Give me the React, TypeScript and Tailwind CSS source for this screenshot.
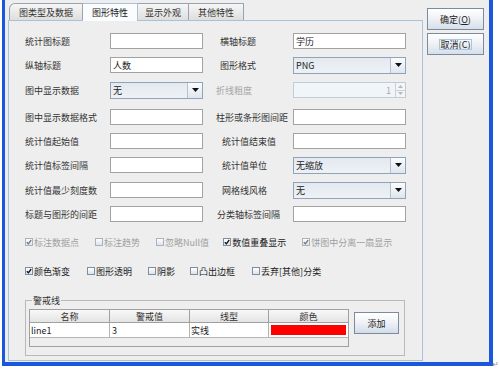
import React from "react";

const font = "font-['Noto_Sans_CJK_SC','Noto_Sans',sans-serif]";

type FieldProps = { value?: string; className?: string };

const TextField: React.FC<FieldProps> = ({ value = "", className = "" }) => (
  <div
    className={`h-[16px] border border-[#a2a2a2] bg-white flex items-center px-[2px] text-[#222] ${className}`}
  >
    {value}
  </div>
);

const Arrow = () => (
  <svg width="7" height="4" viewBox="0 0 7 4">
    <path d="M0 0h7L3.5 4z" fill="#111" />
  </svg>
);

const Combo: React.FC<FieldProps> = ({ value = "", className = "" }) => (
  <div className={`h-[17px] flex border border-[#8fa3bb] ${className}`}>
    <div className="flex-1 flex items-center px-[2px] bg-gradient-to-b from-[#e4e9f0] to-[#eef2f6] text-[#222]">
      {value}
    </div>
    <div className="w-[15px] border-l border-[#b3c1d2] flex items-center justify-center bg-gradient-to-b from-[#fbfcfd] to-[#dfe6ee]">
      <Arrow />
    </div>
  </div>
);

const Spinner: React.FC<FieldProps> = ({ value = "", className = "" }) => (
  <div className={`h-[16px] flex border border-[#c3ccd6] bg-[#f0f5fa] ${className}`}>
    <div className="flex-1 flex items-center justify-end pr-[4px] text-[#a8a8a8]">{value}</div>
    <div className="w-[10px] flex flex-col border-l border-[#c9d1da]">
      <div className="flex-1 border-b border-[#c9d1da] bg-[#f3f5f8] flex items-center justify-center">
        <svg width="5" height="3" viewBox="0 0 5 3">
          <path d="M0 3h5L2.5 0z" fill="#b9b9b9" />
        </svg>
      </div>
      <div className="flex-1 bg-[#f3f5f8] flex items-center justify-center">
        <svg width="5" height="3" viewBox="0 0 5 3">
          <path d="M0 0h5L2.5 3z" fill="#b9b9b9" />
        </svg>
      </div>
    </div>
  </div>
);

type CheckProps = { label: string; checked?: boolean; disabled?: boolean; className?: string };

const Check: React.FC<CheckProps> = ({ label, checked, disabled, className = "" }) => (
  <div className={`flex items-center ${className}`}>
    <div
      className={`w-[8px] h-[8px] border flex items-center justify-center bg-gradient-to-b from-white to-[#dbe3ec] ${
        disabled ? "border-[#a9b3bf]" : "border-[#7d8ea2]"
      }`}
    >
      {checked && (
        <svg width="6" height="6" viewBox="0 0 6 6">
          <path
            d="M0.8 3.2 L2.4 4.8 L5.2 1"
            fill="none"
            stroke={disabled ? "#777" : "#111"}
            strokeWidth="1.3"
          />
        </svg>
      )}
    </div>
    <span className={`ml-[1px] whitespace-nowrap ${disabled ? "text-[#a0a0a0]" : "text-[#222]"}`}>
      {label}
    </span>
  </div>
);

const DialogButton: React.FC<{ text: string; mnemonic: string; focused?: boolean }> = ({
  text,
  mnemonic,
  focused,
}) => (
  <div className="h-[22px] w-[57px] border border-[#7b8a9c] bg-gradient-to-b from-white via-[#eef1f5] to-[#d6dfea] flex items-center justify-center text-[#222]">
    <span className={`px-[1px] ${focused ? "outline outline-1 outline-[#a9c5e4]" : ""}`}>
      {text}(<span className="underline">{mnemonic}</span>)
    </span>
  </div>
);

const Tab: React.FC<{ label: string; selected?: boolean; first?: boolean; className?: string }> = ({
  label,
  selected,
  first,
  className = "",
}) => (
  <div
    className={`h-[17px] flex items-center justify-center border-t border-r ${
      first ? "border-l rounded-tl-[6px]" : ""
    } ${
      selected
        ? "bg-[#fafcfe] border-[#a8c2dc] h-[18px] -mb-[1px] text-[#222] z-10"
        : "bg-gradient-to-b from-[#f6f6f6] to-[#dedede] border-[#9aa4b0] text-[#333]"
    } ${className}`}
  >
    {label}
  </div>
);

const Row: React.FC<{ className?: string; children: React.ReactNode }> = ({ className = "", children }) => (
  <div className={`h-[16px] flex items-center ${className}`}>{children}</div>
);

const leftLabel = "w-[85px] text-[#333] whitespace-nowrap";

export default function App() {
  return (
    <div className={`w-[500px] h-[371px] bg-white relative text-[9px] leading-none ${font}`}>
      <div className="ml-[2px] w-[491px] h-[366px] border-l-[3px] border-r-[4px] border-b-[4px] border-[#1b57de] bg-[#eeeeee] flex">
        {/* tabs + panel */}
        <div className="ml-[3px] w-[415px] flex flex-col">
          <div className="h-[20px] flex items-end pl-[1px]">
            <Tab label="图类型及数据" first className="w-[74px]" />
            <Tab label="图形特性" selected className="w-[55px]" />
            <Tab label="显示外观" className="w-[51px]" />
            <Tab label="其他特性" className="w-[55px]" />
          </div>
          <div className="h-[341px] border border-[#a8c2dc] pl-[16px] flex flex-col">
            <Row className="mt-[12px]">
              <span className={leftLabel}>统计图标题</span>
              <TextField className="w-[93px]" />
              <span className="ml-[17px] w-[73px] text-[#333]">横轴标题</span>
              <TextField className="w-[113px]" value="学历" />
            </Row>
            <Row className="mt-[8px]">
              <span className={leftLabel}>纵轴标题</span>
              <TextField className="w-[93px]" value="人数" />
              <span className="ml-[17px] w-[73px] text-[#333]">图形格式</span>
              <Combo className="w-[113px]" value="PNG" />
            </Row>
            <Row className="mt-[9px]">
              <span className={leftLabel}>图中显示数据</span>
              <Combo className="w-[93px]" value="无" />
              <span className="ml-[13px] w-[77px] text-[#a5a5a5]">折线粗度</span>
              <Spinner className="w-[113px]" value="1" />
            </Row>
            <Row className="mt-[11px]">
              <span className={leftLabel}>图中显示数据格式</span>
              <TextField className="w-[93px]" />
              <span className="ml-[13px] w-[77px] text-[#333] whitespace-nowrap">柱形或条形图间距</span>
              <TextField className="w-[113px]" />
            </Row>
            <Row className="mt-[8px]">
              <span className={leftLabel}>统计值起始值</span>
              <TextField className="w-[93px]" />
              <span className="ml-[19px] w-[71px] text-[#333]">统计值结束值</span>
              <TextField className="w-[113px]" />
            </Row>
            <Row className="mt-[8px]">
              <span className={leftLabel}>统计值标签间隔</span>
              <TextField className="w-[93px]" />
              <span className="ml-[19px] w-[71px] text-[#333]">统计值单位</span>
              <Combo className="w-[113px]" value="无缩放" />
            </Row>
            <Row className="mt-[9px]">
              <span className={leftLabel}>统计值最少刻度数</span>
              <TextField className="w-[93px]" />
              <span className="ml-[19px] w-[71px] text-[#333]">网格线风格</span>
              <Combo className="w-[113px]" value="无" />
            </Row>
            <Row className="mt-[8px]">
              <span className={leftLabel}>标题与图形的间距</span>
              <TextField className="w-[93px]" />
              <span className="ml-[14px] w-[76px] text-[#333] whitespace-nowrap">分类轴标签间隔</span>
              <TextField className="w-[113px]" />
            </Row>

            {/* checkboxes */}
            <div className="mt-[15px] h-[10px] flex items-center">
              <Check label="标注数据点" checked disabled />
              <Check label="标注趋势" disabled className="ml-[16px]" />
              <Check label="忽略Null值" disabled className="ml-[16px]" />
              <Check label="数值重叠显示" checked className="ml-[14px]" />
              <Check label="饼图中分离一扇显示" checked disabled className="ml-[16px]" />
            </div>
            <div className="mt-[19px] h-[10px] flex items-center">
              <Check label="颜色渐变" checked />
              <Check label="图形透明" className="ml-[17px]" />
              <Check label="阴影" className="ml-[16px]" />
              <Check label="凸出边框" className="ml-[15px]" />
              <Check label="丢弃[其他]分类" className="ml-[17px]" />
            </div>

            {/* warning lines */}
            <fieldset className="mt-[20px] w-[380px] h-[60px] border border-[#b9b9b9] pl-[3px]">
              <legend className="ml-[3px] px-[1px] text-[#333]">警戒线</legend>
              <div className="flex mt-[4px]">
                <div className="w-[320px] h-[38px] border border-[#a0a0a0] bg-[#eeeeee] flex flex-col">
                  <div className="h-[13px] flex bg-gradient-to-b from-[#f8f8f8] to-[#e4e4e4] border-b border-[#a0a0a0] text-[#333]">
                    <div className="w-[80px] border-r border-[#a0a0a0] flex items-center justify-center">名称</div>
                    <div className="w-[80px] border-r border-[#a0a0a0] flex items-center justify-center">警戒值</div>
                    <div className="w-[79px] border-r border-[#a0a0a0] flex items-center justify-center">线型</div>
                    <div className="flex-1 flex items-center justify-center">颜色</div>
                  </div>
                  <div className="h-[15px] flex bg-white border-b border-[#b5b5b5] text-[#222]">
                    <div className="w-[80px] border-r border-[#b5b5b5] flex items-center px-[1px]">line1</div>
                    <div className="w-[80px] border-r border-[#b5b5b5] flex items-center px-[2px]">3</div>
                    <div className="w-[79px] border-r border-[#b5b5b5] flex items-center px-[1px]">实线</div>
                    <div className="flex-1 flex items-center px-[2px]">
                      <div className="w-full h-[10px] bg-[#ff0000]" />
                    </div>
                  </div>
                </div>
                <div className="ml-[5px] mt-[3px] h-[22px] w-[45px] border border-[#7b8a9c] bg-gradient-to-b from-white via-[#eef1f5] to-[#d3dcea] flex items-center justify-center text-[#222]">
                  添加
                </div>
              </div>
            </fieldset>
          </div>
        </div>

        {/* dialog buttons */}
        <div className="ml-[4px] mt-[8px] flex flex-col gap-[3px]">
          <DialogButton text="确定" mnemonic="O" />
          <DialogButton text="取消" mnemonic="C" focused />
        </div>
      </div>
      <span className="absolute left-[492px] top-[360px] text-[8px] text-[#888]">↵</span>
    </div>
  );
}
